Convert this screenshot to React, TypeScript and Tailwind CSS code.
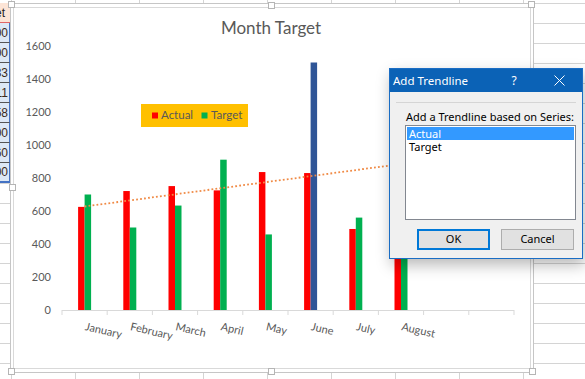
import React from "react";

const actual = [625, 721, 751, 725, 836, 830, 491, 1100];
const target = [700, 500, 633, 911, 458, 1500, 560, 600];
const months = ["January", "February", "March", "April", "May", "June", "July", "August"];
const cellVals = ["700", "500", "633", "911", "458", "1500", "560", "900"];
const base = 310;
const k = 0.165;
const cx = (i: number) => 62 + 45.2 * (i + 0.5);
const yv = (v: number) => base - v * k;
const chartFont = "Lato, 'Liberation Sans', sans-serif";

function GridBg() {
  const rows = Array.from({ length: 19 }, (_, i) => 3.5 + 20 * i);
  const cols = Array.from({ length: 9 }, (_, i) => 11.5 + 64 * i);
  return (
    <svg className="absolute inset-0" width={585} height={379}>
      {rows.map((y) => (
        <line key={"r" + y} x1={0} x2={585} y1={y} y2={y} stroke="#d4d4d4" strokeWidth={1} />
      ))}
      {cols.map((x) => (
        <line key={"c" + x} x1={x} x2={x} y1={0} y2={379} stroke="#d4d4d4" strokeWidth={1} />
      ))}
    </svg>
  );
}

function LeftCells() {
  return (
    <div className="flex w-[10px] flex-col font-['Liberation_Sans',sans-serif] text-[12px]">
      <div className="flex h-[20px] items-center justify-end overflow-hidden border-b border-[#e06666] bg-[#fce4d6] pr-[5px] text-[#222]">
        <span className="whitespace-nowrap">Target</span>
      </div>
      {cellVals.map((v, i) => (
        <div
          key={i}
          className={
            "flex h-[20px] items-center justify-end overflow-hidden border-r border-[#4472c4] bg-[#dde8f5] pr-[1px] text-[#3a2a1a] " +
            (i === cellVals.length - 1 ? "border-b-2 border-b-[#4472c4]" : "border-b border-b-[#555555]")
          }
        >
          <span className="whitespace-nowrap">{v}</span>
        </div>
      ))}
    </div>
  );
}

function Handle({ className }: { className: string }) {
  return <div className={"absolute h-[7px] w-[7px] border border-[#b5b5b5] bg-white " + className} />;
}

function Chart() {
  const ticks = Array.from({ length: 11 }, (_, i) => 62 + 45.2 * i);
  const yLabels = [0, 200, 400, 600, 800, 1000, 1200, 1400, 1600];
  const bw = 6.5;
  return (
    <svg width={516} height={360} viewBox="14 8 516 360" style={{ fontFamily: chartFont }}>
      <text x={271} y={34} textAnchor="middle" fontSize={17} fill="#595959">
        Month Target
      </text>
      {yLabels.map((v) => (
        <text key={v} x={51} y={yv(v) + 4} textAnchor="end" fontSize={11} fill="#595959">
          {v}
        </text>
      ))}
      {actual.map((v, i) => (
        <rect key={"a" + i} x={cx(i) - bw} y={yv(v)} width={bw} height={base - yv(v)} fill="#ff0000" />
      ))}
      {target.map((v, i) => (
        <rect
          key={"t" + i}
          x={cx(i)}
          y={yv(v)}
          width={bw}
          height={base - yv(v)}
          fill={i === 5 ? "#2f5597" : "#00b050"}
        />
      ))}
      <line x1={62} x2={514} y1={310.5} y2={310.5} stroke="#d9d9d9" strokeWidth={1} />
      {ticks.map((x) => (
        <line key={x} x1={x} x2={x} y1={310} y2={315} stroke="#d9d9d9" strokeWidth={1} />
      ))}
      <line
        x1={cx(0)}
        y1={206.5}
        x2={cx(7)}
        y2={164}
        stroke="#f08a45"
        strokeWidth={1.8}
        strokeDasharray="1.8 2.2"
      />
      {months.map((m, i) => (
        <text
          key={m}
          x={cx(i)}
          y={330}
          fontSize={11}
          fill="#595959"
          transform={`rotate(13 ${cx(i)} 330)`}
        >
          {m}
        </text>
      ))}
      <rect x={141} y={104} width={107} height={23} fill="#ffc000" />
      <rect x={152} y={112.5} width={6} height={6} fill="#ff0000" />
      <text x={161} y={119} fontSize={11.5} fill="#595959">
        Actual
      </text>
      <rect x={201.5} y={112.5} width={6} height={6} fill="#00b050" />
      <text x={211} y={119} fontSize={11.5} fill="#595959">
        Target
      </text>
    </svg>
  );
}

function ChartFrame() {
  return (
    <div className="relative h-[370px] w-[524px] border border-[#c6c6c6] bg-white pb-[3px] pl-[2px] pr-[2px] pt-[3px]">
      <div className="h-full w-full border border-[#d9d9d9]">
        <Chart />
      </div>
      <Handle className="left-[-3px] top-[-3px]" />
      <Handle className="left-[257px] top-[-2px]" />
      <Handle className="right-[-2px] top-[-3px]" />
      <Handle className="left-[-2px] top-[180px]" />
      <Handle className="right-[-2px] top-[180px]" />
      <Handle className="bottom-[-3px] left-[-3px]" />
      <Handle className="bottom-[-3px] left-[257px]" />
      <Handle className="bottom-[-3px] right-[-3px]" />
    </div>
  );
}

function Dialog() {
  return (
    <div className="absolute left-[389px] top-[68px] flex h-[191px] w-[194px] flex-col border border-[#1a6dc4] bg-[#f0f0f0] font-['Noto_Sans',sans-serif] text-[11px] text-black shadow-[2px_6px_14px_rgba(0,0,0,0.28)]">
      <div className="flex h-[23px] items-center bg-[#0b62b6] text-white">
        <span className="pl-[3px] text-[11.5px] leading-none">Add Trendline</span>
        <div className="flex-1" />
        <div className="flex w-[46px] items-center justify-center text-[12px] leading-none">?</div>
        <div className="flex w-[45px] items-center justify-center">
          <svg width={11} height={11} viewBox="0 0 11 11">
            <path d="M0.5 0.5 L10.5 10.5 M10.5 0.5 L0.5 10.5" stroke="#ffffff" strokeWidth={1} />
          </svg>
        </div>
      </div>
      <div className="mx-[6px] mt-[10px] h-px bg-[#d5d5d5]" />
      <div className="mt-[6px] h-[15px] pl-[16px] leading-[15px]">Add a Trendline based on Series:</div>
      <div className="ml-[15px] mt-[1px] flex h-[95px] w-[171px] flex-col border border-[#828790] bg-white p-px">
        <div className="h-[13px] bg-[#3399ff] pl-[2px] leading-[13px] text-white">Actual</div>
        <div className="h-[14px] pl-[2px] leading-[13px]">Target</div>
      </div>
      <div className="mt-[9px] flex gap-[11px] pl-[27px]">
        <div className="flex h-[21px] w-[73px] items-center justify-center border-2 border-[#0078d7] bg-[#e1e1e1]">
          OK
        </div>
        <div className="flex h-[21px] w-[73px] items-center justify-center border border-[#adadad] bg-[#e1e1e1]">
          Cancel
        </div>
      </div>
    </div>
  );
}

export default function App() {
  return (
    <div className="relative h-[379px] w-[585px] overflow-hidden bg-white">
      <GridBg />
      <div className="relative flex items-start pt-[3px]">
        <LeftCells />
        <ChartFrame />
      </div>
      <Dialog />
    </div>
  );
}
